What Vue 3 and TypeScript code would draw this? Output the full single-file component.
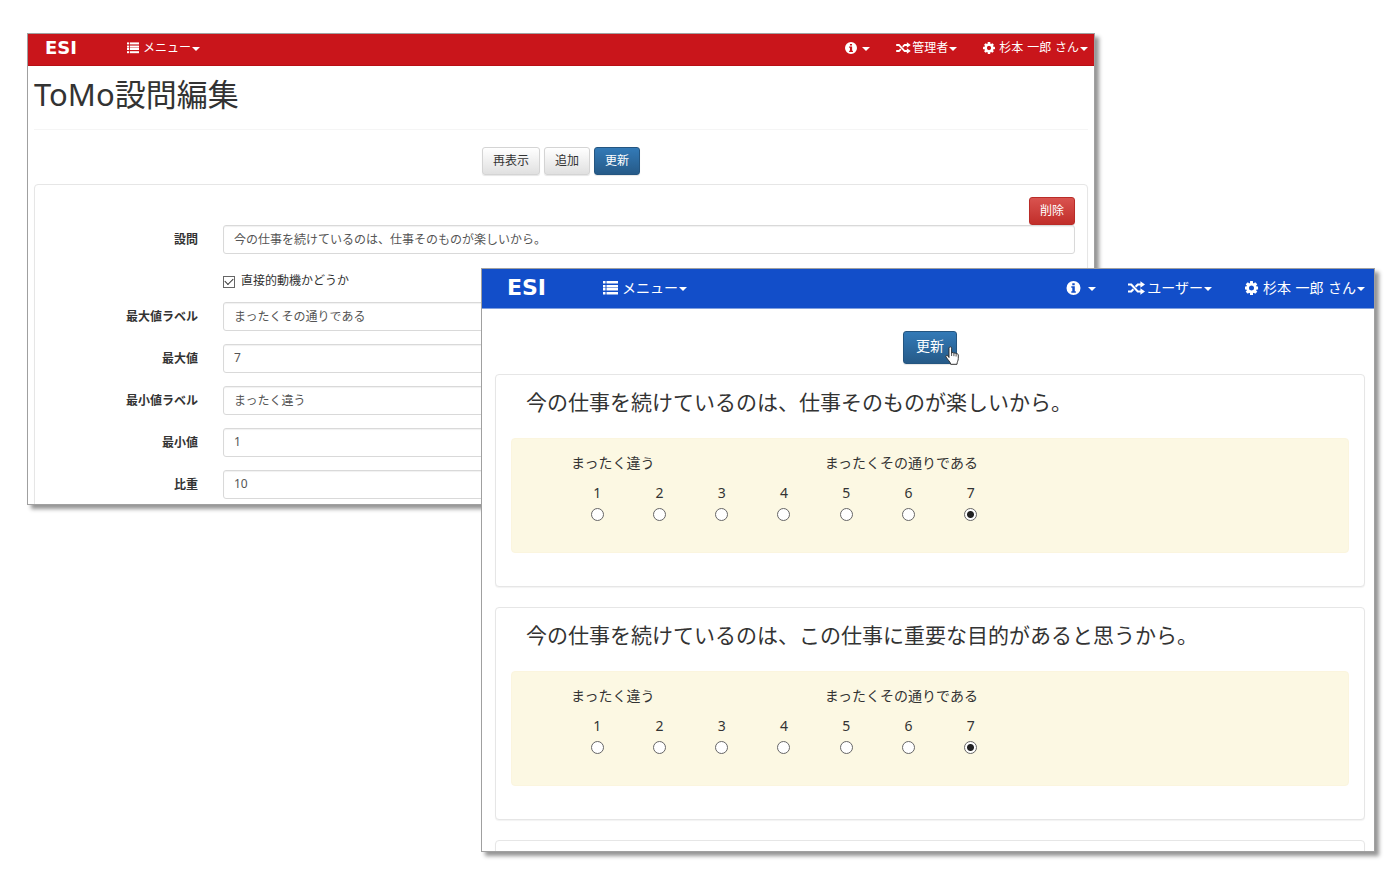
<script setup lang="ts">
import { reactive, ref } from 'vue'

interface Field {
  id: string
  label: string
  value: string
}

interface Survey {
  id: string
  title: string
  answer: number
}

interface NavBar {
  theme: string
  role: string
}

const admin: NavBar = { theme: 'red', role: '管理者' }
const user: NavBar = { theme: 'blue', role: 'ユーザー' }

const question = ref('今の仕事を続けているのは、仕事そのものが楽しいから。')
const direct = ref(true)
const fields = reactive<Field[]>([
  { id: 'max-label', label: '最大値ラベル', value: 'まったくその通りである' },
  { id: 'max', label: '最大値', value: '7' },
  { id: 'min-label', label: '最小値ラベル', value: 'まったく違う' },
  { id: 'min', label: '最小値', value: '1' },
  { id: 'weight', label: '比重', value: '10' },
])

const surveys = reactive<Survey[]>([
  { id: 'q1', title: '今の仕事を続けているのは、仕事そのものが楽しいから。', answer: 7 },
  { id: 'q2', title: '今の仕事を続けているのは、この仕事に重要な目的があると思うから。', answer: 7 },
])
const scale = [1, 2, 3, 4, 5, 6, 7]
const teeth = [0, 45, 90, 135]
const rows = [0, 4, 7, 11]
</script>

<template>
  <main class="desk">
    <svg class="defs" aria-hidden="true">
      <symbol id="i-list" viewBox="0 0 15 14">
        <g v-for="y in rows" :key="y">
          <rect x="0" :y="y" width="2.5" height="2.5" />
          <rect x="3.5" :y="y" width="11.5" height="2.5" />
        </g>
      </symbol>
      <symbol id="i-info" viewBox="0 0 14 14">
        <path fill-rule="evenodd" d="M7 0a7 7 0 1 1 0 14A7 7 0 0 1 7 0zM5.8 2.2v2h2.4v-2zM4.8 5.3v1.4h1v3.6h-1v1.4h4.5v-1.4h-1v-5z" />
      </symbol>
      <symbol id="i-shuffle" viewBox="0 0 17 14">
        <path d="M0 3.5h3.2l6.6 7H13M0 10.500h3.200l2.200-2.300M7.600 5.800l2.200-2.300H13" fill="none" stroke="currentColor" stroke-width="2.1" />
        <path d="M12.400 0.200L17 3.500l-4.600 3.300zM12.400 7.200l4.600 3.300-4.600 3.300z" />
      </symbol>
      <symbol id="i-cog" viewBox="0 0 14 14">
        <rect v-for="a in teeth" :key="a" x="5.5" y="0" width="3" height="14" rx="0.5" :transform="`rotate(${a} 7 7)`" mask="url(#cog-hole)" />
        <circle cx="7" cy="7" r="3.9" fill="none" stroke="currentColor" stroke-width="2.8" />
      </symbol>
      <mask id="cog-hole" maskUnits="userSpaceOnUse" x="0" y="0" width="14" height="14">
        <rect width="14" height="14" fill="#fff" />
        <circle cx="7" cy="7" r="3" fill="#000" />
      </mask>
    </svg>

    <section class="window editor" aria-label="設問編集">
      <nav class="navbar" :class="admin.theme">
        <a class="brand" href="#">ESI</a>
        <button type="button" class="nav-item"><svg class="ico"><use href="#i-list" /></svg><span class="txt">メニュー</span><i class="caret"></i></button>
        <span class="spacer"></span>
        <button type="button" class="nav-item info" aria-label="情報"><svg class="ico"><use href="#i-info" /></svg><i class="caret"></i></button>
        <button type="button" class="nav-item tight"><svg class="ico wide"><use href="#i-shuffle" /></svg><span class="txt">{{ admin.role }}</span><i class="caret"></i></button>
        <button type="button" class="nav-item"><svg class="ico"><use href="#i-cog" /></svg><span class="txt">杉本 一郎 さん</span><i class="caret"></i></button>
      </nav>
      <div class="content">
        <h1>ToMo設問編集</h1>
        <div class="actions">
          <button type="button" class="btn">再表示</button>
          <button type="button" class="btn">追加</button>
          <button type="button" class="btn primary">更新</button>
        </div>
        <form class="panel form" @submit.prevent>
          <div class="remove"><button type="button" class="btn danger">削除</button></div>
          <div class="row">
            <label for="question">設問</label>
            <input id="question" v-model="question" type="text" class="field" />
          </div>
          <div class="row">
            <span></span>
            <label class="check"><input v-model="direct" type="checkbox" /><span>直接的動機かどうか</span></label>
          </div>
          <div v-for="f in fields" :key="f.id" class="row">
            <label :for="f.id">{{ f.label }}</label>
            <input :id="f.id" v-model="f.value" type="text" class="field" />
          </div>
        </form>
      </div>
    </section>

    <section class="window answer" aria-label="回答">
      <nav class="navbar" :class="user.theme">
        <a class="brand" href="#">ESI</a>
        <button type="button" class="nav-item"><svg class="ico"><use href="#i-list" /></svg><span class="txt">メニュー</span><i class="caret"></i></button>
        <span class="spacer"></span>
        <button type="button" class="nav-item info" aria-label="情報"><svg class="ico"><use href="#i-info" /></svg><i class="caret"></i></button>
        <button type="button" class="nav-item tight"><svg class="ico wide"><use href="#i-shuffle" /></svg><span class="txt">{{ user.role }}</span><i class="caret"></i></button>
        <button type="button" class="nav-item"><svg class="ico"><use href="#i-cog" /></svg><span class="txt">杉本 一郎 さん</span><i class="caret"></i></button>
      </nav>
      <div class="content">
        <div class="actions">
          <div class="pointed">
            <button type="button" class="btn primary">更新</button>
            <svg class="pointer" viewBox="0 0 14 19" aria-hidden="true">
              <path d="M4 11.500V2.200C4 .3 6.600.3 6.600 2.200v5c.3-1 2.200-.9 2.300.3.5-.8 2.100-.6 2.200.5.7-.6 2.200-.2 2.200 1v3.400c0 2.500-1.300 3.400-1.300 5.900H5.700c0-2-3-4.600-4.700-7.300C.2 9.600 2 8.700 2.900 9.900z" fill="#fff" stroke="#222" stroke-width="0.9" stroke-linejoin="round" />
              <path d="M6.600 7v3M8.900 7.500v2.700M11.100 8.200v2.300" stroke="#222" stroke-width="0.8" />
            </svg>
          </div>
        </div>
        <article v-for="s in surveys" :key="s.id" class="panel survey">
          <h2>{{ s.title }}</h2>
          <div class="well" role="radiogroup" :aria-label="s.title">
            <div class="scale">
              <span class="low">まったく違う</span>
              <span class="high">まったくその通りである</span>
              <label v-for="n in scale" :key="n" class="choice">
                <span>{{ n }}</span>
                <input v-model="s.answer" type="radio" :name="s.id" :value="n" />
              </label>
            </div>
          </div>
        </article>
        <article class="panel survey"></article>
      </div>
    </section>
  </main>
</template>

<style>
body {
  margin: 0;
  background: #fff;
}
</style>

<style scoped>
.desk {
  position: relative;
  min-height: 100vh;
  overflow: hidden;
  font-family: "Noto Sans", "Noto Sans CJK JP", sans-serif;
  color: #333;
}
.desk * {
  box-sizing: border-box;
}
button,
input {
  font: inherit;
  margin: 0;
}
.defs {
  position: absolute;
  width: 0;
  height: 0;
}
.window {
  position: absolute;
  overflow: hidden;
  background: #fff;
  border: 1px solid #a0a0a0;
  box-shadow: 4px 4px 4px rgba(0, 0, 0, 0.42);
}
.editor {
  inset: 33px 301px 364px 27px;
  font-size: 12px;
  line-height: 20px;
}
.answer {
  inset: 268px 21px 17px 481px;
  font-size: 14px;
  line-height: 20px;
}

/* navigation */
.navbar {
  display: flex;
  align-items: center;
  font-family: "DejaVu Sans", "Noto Sans CJK JP", sans-serif;
  color: #fff;
}
.red {
  height: 32px;
  padding: 0 6px 3px 17px;
  background: #c9151b;
  border-bottom: 1px solid #b80f14;
}
.blue {
  height: 40px;
  padding: 0 9px 1px 25px;
  background: #124ec9;
  border-bottom: 1px solid #7f9fdf;
}
.brand {
  color: #fff;
  font-weight: bold;
  text-decoration: none;
}
.red .brand {
  width: 82px;
  font-size: 18px;
}
.blue .brand {
  width: 96px;
  font-size: 22px;
}
.nav-item {
  display: flex;
  align-items: center;
  padding: 0;
  border: 0;
  background: none;
  color: #fff;
  white-space: nowrap;
}
.spacer {
  flex: 1;
}
.ico {
  fill: currentColor;
  width: 12px;
  height: 12px;
  margin-right: 4px;
}
.ico.wide {
  width: 15px;
  margin-right: 1px;
}
.blue .ico {
  width: 15px;
  height: 14px;
}
.blue .ico.wide {
  width: 17px;
  margin-right: 2px;
}
.caret {
  margin-left: 1px;
  margin-top: 2px;
  border-top: 4px solid #fff;
  border-left: 4px solid transparent;
  border-right: 4px solid transparent;
}
.blue .nav-item.info .caret {
  margin-left: 3px;
}
.red .nav-item.info,
.red .tight {
  margin-right: 26px;
}
.blue .nav-item.info,
.blue .tight {
  margin-right: 32px;
}

/* buttons */
.actions {
  display: flex;
  justify-content: center;
  gap: 4px;
}
.btn {
  height: 28px;
  padding: 0 10px;
  border: 1px solid #d4d4d4;
  border-radius: 3px;
  background: linear-gradient(#fff, #e0e0e0);
  box-shadow: 0 1px 1px rgba(0, 0, 0, 0.1);
  color: #333;
  line-height: 20px;
}
.btn.primary {
  border-color: #245580;
  background: linear-gradient(#337ab7, #265a88);
  color: #fff;
}
.btn.danger {
  border-color: #b92c28;
  background: linear-gradient(#d9534f, #c12e2a);
  color: #fff;
}
.answer .btn {
  height: 33px;
  padding: 0 12px 4px;
}
.pointed {
  position: relative;
}
.pointer {
  position: absolute;
  right: -2px;
  bottom: -1px;
  width: 14px;
  height: 19px;
}

.panel {
  border: 1px solid #e6e6e6;
  border-radius: 4px;
  background: #fff;
  box-shadow: 0 1px 1px rgba(0, 0, 0, 0.05);
}

/* question editor */
.editor .content {
  padding: 8px 6px 0;
}
h1 {
  margin: 0 0 17px;
  padding-bottom: 15px;
  border-bottom: 1px solid #f5f5f5;
  font-size: 31px;
  line-height: 40px;
  font-weight: 400;
}
.form {
  display: flex;
  flex-direction: column;
  gap: 13px;
  margin-top: 9px;
  padding: 12px;
}
.remove {
  display: flex;
  justify-content: flex-end;
  margin-bottom: -13px;
}
.row {
  display: grid;
  grid-template-columns: 151px minmax(0, 1fr);
  column-gap: 25px;
  align-items: center;
}
.row > label:first-child {
  text-align: right;
  font-weight: 700;
}
.field {
  width: 100%;
  height: 29px;
  padding: 0 10px 2px;
  border: 1px solid #d9d9d9;
  border-radius: 3px;
  background: #fff;
  box-shadow: inset 0 1px 1px rgba(0, 0, 0, 0.06);
  color: #555;
  outline: none;
}
.check {
  display: flex;
  align-items: center;
  gap: 6px;
  height: 22px;
  padding-top: 6px;
}
.check input {
  appearance: none;
  display: grid;
  place-items: center;
  width: 12px;
  height: 12px;
  margin-top: 1px;
  border: 1px solid #666;
  background: #fff;
}
.check input:checked::before {
  content: "";
  width: 7px;
  height: 4px;
  margin-bottom: 2px;
  border-left: 1px solid #333;
  border-bottom: 1px solid #333;
  transform: rotate(-45deg);
}

/* survey answers */
.answer .content {
  display: flex;
  flex-direction: column;
  padding: 22px 9px 0 13px;
}
.answer .actions {
  margin-bottom: 10px;
}
.survey {
  min-height: 213px;
  flex: none;
  margin-bottom: 20px;
  padding: 12px 15px 33px;
}
h2 {
  margin: 0 0 21px;
  padding-left: 15px;
  font-size: 21px;
  line-height: 30px;
  font-weight: 400;
}
.well {
  padding: 14px 54px 31px;
  border: 1px solid #fbf5de;
  border-radius: 4px;
  background: #fcf8e3;
}
.scale {
  display: grid;
  grid-template-columns: repeat(7, 1fr);
  row-gap: 10px;
  width: 100%;
  max-width: 436px;
}
.low {
  grid-column: 1 / 4;
  padding-left: 5px;
}
.high {
  grid-column: 4 / 8;
  padding-right: 24px;
  text-align: right;
}
.choice {
  display: flex;
  flex-direction: column;
  align-items: center;
  gap: 5px;
}
.choice input {
  appearance: none;
  width: 13px;
  height: 13px;
  border: 1px solid #666;
  border-radius: 50%;
  background: #fff;
}
.choice input:checked {
  background: radial-gradient(circle, #222 0 3px, #fff 4px);
}
</style>
